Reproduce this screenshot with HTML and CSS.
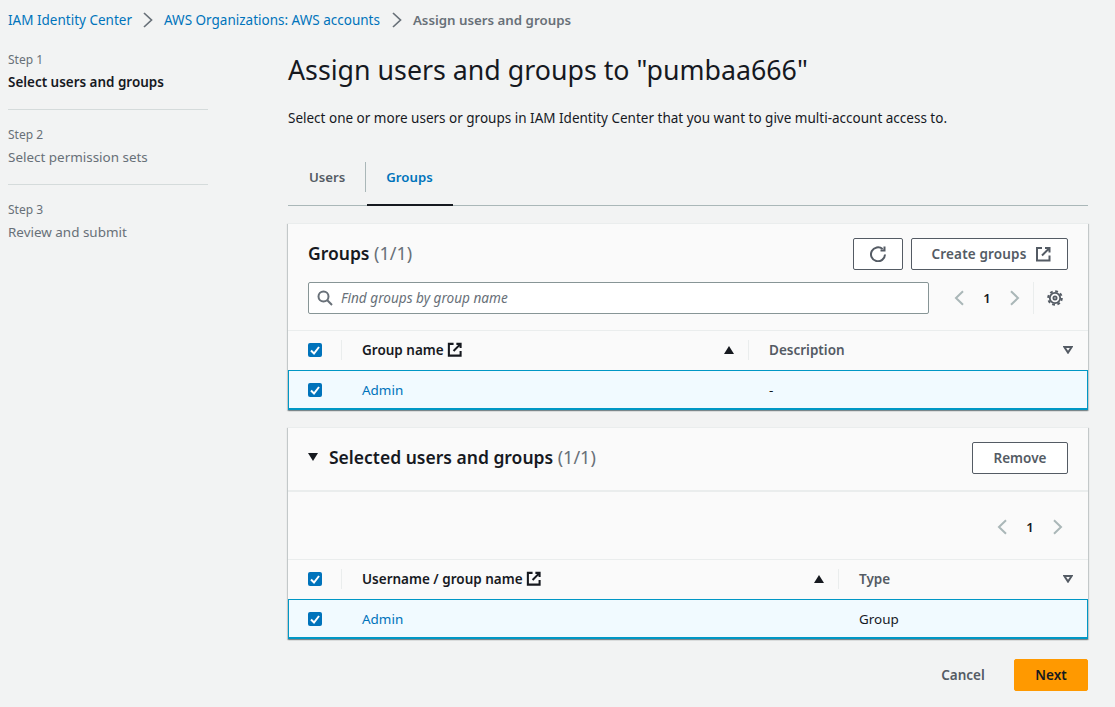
FILE: index.html
```html
<!DOCTYPE html>
<html lang="en">
<head>
  <meta charset="UTF-8" />
  <title>Assign users and groups</title>
  <link rel="stylesheet" href="styles.css">
</head>
<body>
  <nav class="crumbs">
    <a href="#">IAM Identity Center</a>
    <svg class="crumb-sep" viewBox="0 0 16 16"><path d="M4 1 11.5 8 4 15"/></svg>
    <a href="#">AWS Organizations: AWS accounts</a>
    <svg class="crumb-sep" viewBox="0 0 16 16"><path d="M4 1 11.5 8 4 15"/></svg>
    <span class="crumb-now">Assign users and groups</span>
  </nav>

  <div class="layout">
    <ul class="steps">
      <li class="step">
        <div class="step-no">Step 1</div>
        <div class="step-name active">Select users and groups</div>
      </li>
      <li class="step">
        <div class="step-no">Step 2</div>
        <div class="step-name">Select permission sets</div>
      </li>
      <li class="step">
        <div class="step-no">Step 3</div>
        <div class="step-name">Review and submit</div>
      </li>
    </ul>

    <main class="main">
      <h1 class="title">Assign users and groups to "pumbaa666"</h1>
      <p class="intro">Select one or more users or groups in IAM Identity Center that you want to give multi-account access to.</p>

      <div class="tabs">
        <div class="tab">Users</div>
        <div class="tab tab-on">Groups</div>
      </div>

      <section class="card card-groups">
        <div class="card-head">
          <h2 class="card-title">Groups <span class="count">(1/1)</span></h2>
          <div class="actions">
            <button class="btn btn-icon">
              <svg class="icon" viewBox="0 0 16 16"><path d="M15 8.5A7 7 0 1 1 12.6 3"/><path d="M14.5 .5v4h-4"/></svg>
            </button>
            <button class="btn btn-create">Create groups
              <svg class="icon" viewBox="0 0 16 16"><path d="M7 2H2v12.5h12.5V9.5"/><path d="M10 2h4.5v4.5M14.5 2 7 9.5"/></svg>
            </button>
          </div>
        </div>
        <div class="filter-row">
          <div class="search">
            <svg class="search-icon" viewBox="0 0 16 16"><circle cx="6.5" cy="6.5" r="5"/><path d="m10.3 10.3 4.7 4.7"/></svg>
            <span class="placeholder">Find groups by group name</span>
          </div>
          <div class="pager">
            <svg class="pager-arrow" viewBox="0 0 16 16"><path d="M11 1.2 4 8l7 6.8"/></svg>
            <span class="page-no">1</span>
            <svg class="pager-arrow" viewBox="0 0 16 16"><path d="M5 1.2 12 8l-7 6.8"/></svg>
          </div>
          <div class="settings">
            <svg class="gear" viewBox="0 0 16 16"><circle cx="8" cy="8" r="5.2"/><circle class="gear-teeth" cx="8" cy="8" r="6.8"/><circle cx="8" cy="8" r="1.6"/></svg>
          </div>
        </div>
        <div class="thead thead-groups">
          <div class="th-check"><span class="check"><svg viewBox="0 0 14 14"><path d="m3 7.5 3 3 5-6.5"/></svg></span></div>
          <div class="th th-main">
            <span class="th-text">Group name</span>
            <svg class="th-ext" viewBox="0 0 16 16"><path d="M7 2H2v12.5h12.5V9.5"/><path d="M10 2h4.5v4.5M14.5 2 7 9.5"/></svg>
            <span class="sort-up"></span>
          </div>
          <div class="th th-side">
            <span class="th-text th-muted">Description</span>
            <svg class="sort-down" viewBox="0 0 10 8"><path d="M1.3 1h7.4L5 6.6z"/></svg>
          </div>
        </div>
        <div class="row row-groups">
          <div class="th-check"><span class="check"><svg viewBox="0 0 14 14"><path d="m3 7.5 3 3 5-6.5"/></svg></span></div>
          <div class="td-main"><a href="#">Admin</a></div>
          <div class="td-side">-</div>
        </div>
      </section>

      <section class="card card-selected">
        <div class="card-head sel-head">
          <h2 class="card-title"><span class="caret"></span>Selected users and groups <span class="count">(1/1)</span></h2>
          <button class="btn btn-remove">Remove</button>
        </div>
        <div class="pager-row">
          <div class="pager">
            <svg class="pager-arrow" viewBox="0 0 16 16"><path d="M11 1.2 4 8l7 6.8"/></svg>
            <span class="page-no">1</span>
            <svg class="pager-arrow" viewBox="0 0 16 16"><path d="M5 1.2 12 8l-7 6.8"/></svg>
          </div>
        </div>
        <div class="thead thead-selected">
          <div class="th-check"><span class="check"><svg viewBox="0 0 14 14"><path d="m3 7.5 3 3 5-6.5"/></svg></span></div>
          <div class="th th-main">
            <span class="th-text">Username / group name</span>
            <svg class="th-ext" viewBox="0 0 16 16"><path d="M7 2H2v12.5h12.5V9.5"/><path d="M10 2h4.5v4.5M14.5 2 7 9.5"/></svg>
            <span class="sort-up"></span>
          </div>
          <div class="th th-side">
            <span class="th-text th-muted">Type</span>
            <svg class="sort-down" viewBox="0 0 10 8"><path d="M1.3 1h7.4L5 6.6z"/></svg>
          </div>
        </div>
        <div class="row row-selected">
          <div class="th-check"><span class="check"><svg viewBox="0 0 14 14"><path d="m3 7.5 3 3 5-6.5"/></svg></span></div>
          <div class="td-main"><a href="#">Admin</a></div>
          <div class="td-side">Group</div>
        </div>
      </section>

      <div class="footer">
        <button class="btn-link">Cancel</button>
        <button class="btn-next">Next</button>
      </div>
    </main>
  </div>
</body>
</html>
```

FILE: styles.css
```css
* {
  box-sizing: border-box;
}

html, body {
  height: 707px;
  overflow: hidden;
}

body {
  margin: 0;
  background: #f2f3f3;
  color: #16191f;
  font-family: "Noto Sans", "Open Sans", sans-serif;
  font-size: 13.45px;
  line-height: 20px;
}

a {
  color: #0073bb;
  text-decoration: none;
}

svg {
  fill: none;
  stroke: currentColor;
  stroke-width: 2;
}

button {
  font-family: inherit;
}

/* breadcrumbs */
.crumbs {
  display: flex;
  align-items: center;
  height: 20px;
  margin: 10px 0 0 8px;
  font-size: 13.5px;
}

.crumb-sep {
  width: 16px;
  height: 16px;
  margin: 0 8px;
  color: #687078;
  stroke-width: 1.7;
}

.crumb-sep:nth-of-type(2) {
  margin-left: 9px;
}

.crumb-now {
  color: #687078;
  font-size: 13.3px;
  font-weight: 600;
}

.layout {
  display: flex;
}

/* steps */
.steps {
  list-style: none;
  width: 200px;
  margin: 20px 80px 0 8px;
  padding: 0;
}

.step {
  height: 60px;
  margin-bottom: 15px;
  border-bottom: 1px solid #d5dbdb;
}

.step:last-child {
  border-bottom: none;
}

.step-no {
  color: #687078;
  font-size: 12px;
  line-height: 20px;
}

.step-name {
  margin-top: 2px;
  color: #687078;
}

.step-name.active {
  color: #16191f;
  font-weight: 600;
}

/* main column */
.main {
  width: 800px;
}

.title {
  margin: 20px 0 0;
  font-size: 26.75px;
  font-weight: 400;
  line-height: 40px;
}

.intro {
  margin: 18px 0 0;
  font-size: 13.5px;
}

.tabs {
  display: flex;
  height: 44px;
  margin-top: 34px;
  border-bottom: 1px solid #aab7b8;
}

.tab {
  height: 44px;
  padding: 5px 21px 0 21px;
  color: #545b64;
  font-size: 13.2px;
  font-weight: 600;
  line-height: 20px;
}

.tab:first-child {
  position: relative;
}

.tab:first-child::after {
  content: "";
  position: absolute;
  right: 0;
  top: 0;
  width: 1px;
  height: 30px;
  background: #aab7b8;
}

.tab-on {
  margin-left: 1px;
  padding: 5px 20px 0 19px;
  color: #0073bb;
  border-bottom: 2px solid #16191f;
}

/* cards */
.card {
  background: #fafafa;
  box-shadow: inset 0 1px 0 #eaeded, 0 1px 1px 0 rgba(0, 28, 36, 0.3), 1px 1px 1px 0 rgba(0, 28, 36, 0.15), -1px 1px 1px 0 rgba(0, 28, 36, 0.15);
}

.card-groups {
  margin-top: 17px;
  height: 187px;
}

.card-selected {
  margin-top: 17px;
  height: 212px;
}

.card-head {
  display: flex;
  justify-content: space-between;
  height: 59px;
  padding: 15px 20px 0;
}

.card-title {
  margin: 0;
  font-size: 17.5px;
  font-weight: 600;
  line-height: 30px;
}

.count {
  color: #687078;
  font-size: 18px;
  font-weight: 400;
}

.actions {
  display: flex;
  gap: 8px;
}

.btn {
  display: flex;
  align-items: center;
  justify-content: center;
  height: 32px;
  background: #fff;
  border: 1px solid #545b64;
  border-radius: 2px;
  color: #545b64;
  font-size: 13.5px;
  font-weight: 600;
}

.btn-icon {
  width: 50px;
}

.btn-create {
  gap: 9px;
  width: 157px;
  padding-left: 10px;
  letter-spacing: 0.15px;
}

.btn-remove {
  width: 96px;
}

.icon {
  width: 16px;
  height: 16px;
}

.filter-row {
  display: flex;
  align-items: center;
  height: 49px;
  padding: 0 0 16px 20px;
  border-bottom: 1px solid #eaeded;
}

.search {
  display: flex;
  align-items: center;
  width: 621px;
  height: 32px;
  background: #fff;
  border: 1px solid #879596;
  border-radius: 2px;
}

.search-icon {
  width: 16px;
  height: 16px;
  margin-left: 8px;
  color: #687078;
}

.placeholder {
  margin-left: 8px;
  color: #687078;
  font-size: 13.6px;
  font-style: italic;
}

.pager {
  display: flex;
  align-items: center;
}

.filter-row .pager {
  margin-left: 23px;
}

.pager-arrow {
  width: 16px;
  height: 16px;
  color: #aab7b8;
}

.page-no {
  width: 38px;
  font-size: 13px;
  font-weight: 600;
  text-align: center;
}

.settings {
  display: flex;
  align-items: center;
  height: 32px;
  margin-left: 11px;
  padding-left: 13px;
  border-left: 1px solid #eaeded;
}

.gear {
  width: 16px;
  height: 16px;
  color: #545b64;
  stroke-width: 1.8;
}

.gear-teeth {
  stroke-width: 2;
  stroke-dasharray: 2.8 2.54;
}

/* table */
.thead {
  display: flex;
  align-items: center;
  height: 39px;
  padding-bottom: 2px;
  font-weight: 600;
}

.th-check {
  display: flex;
  align-items: center;
  width: 54px;
  padding-left: 20px;
  flex-shrink: 0;
}

.thead .th-check {
  height: 20px;
  border-right: 1px solid #eaeded;
}

.check {
  display: flex;
  align-items: center;
  justify-content: center;
  width: 14px;
  height: 14px;
  background: #0073bb;
  border-radius: 2px;
  color: #fff;
}

.check svg {
  width: 14px;
  height: 14px;
}

.th {
  display: flex;
  align-items: center;
  height: 20px;
}

.th-main {
  flex-shrink: 0;
  padding-left: 20px;
  border-right: 1px solid #eaeded;
}

.thead-groups .th-main {
  width: 407px;
}

.thead-selected .th-main {
  width: 497px;
}

.th-side {
  flex: 1;
  padding-left: 20px;
}

.th-text {
  font-size: 13.5px;
}

.th-muted {
  color: #545b64;
}

.th-ext {
  width: 15px;
  height: 15px;
  margin-left: 3px;
  stroke-width: 2.2;
}

.sort-up {
  width: 0;
  height: 0;
  margin-left: auto;
  margin-right: 14px;
  border-left: 5.5px solid transparent;
  border-right: 5.5px solid transparent;
  border-bottom: 8px solid #16191f;
}

.sort-down {
  width: 10px;
  height: 8px;
  margin-left: auto;
  margin-right: 15px;
  color: #545b64;
}

.row {
  display: flex;
  align-items: center;
  height: 40px;
  background: #f1faff;
  border: 1px solid #0097c5;
  border-bottom-width: 2px;
}

.row .th-check {
  width: 52px;
  padding-left: 19px;
}

.td-main {
  padding-left: 21px;
  flex-shrink: 0;
}

.row-groups .td-main {
  width: 428px;
}

.row-selected .td-main {
  width: 518px;
}

.td-side {
  color: #16191f;
}

/* selected card */
.sel-head {
  height: 65px;
  border-bottom: 2px solid #eaeded;
}

.caret {
  display: inline-block;
  width: 0;
  height: 0;
  margin-right: 11px;
  vertical-align: 3px;
  border-left: 5.5px solid transparent;
  border-right: 5.5px solid transparent;
  border-top: 8px solid #16191f;
}

.pager-row {
  display: flex;
  justify-content: flex-end;
  align-items: center;
  height: 68px;
  padding: 2px 23px 0 0;
  border-bottom: 1px solid #eaeded;
}

/* footer */
.footer {
  display: flex;
  justify-content: flex-end;
  align-items: center;
  gap: 24px;
  margin-top: 20px;
}

.btn-link {
  width: 54px;
  padding: 0;
  background: none;
  border: none;
  color: #545b64;
  font-size: 13.5px;
  font-weight: 600;
}

.btn-next {
  width: 74px;
  height: 32px;
  background: #ff9900;
  border: 1px solid #ff9900;
  border-radius: 2px;
  color: #16191f;
  font-size: 13.5px;
  font-weight: 600;
}
```
